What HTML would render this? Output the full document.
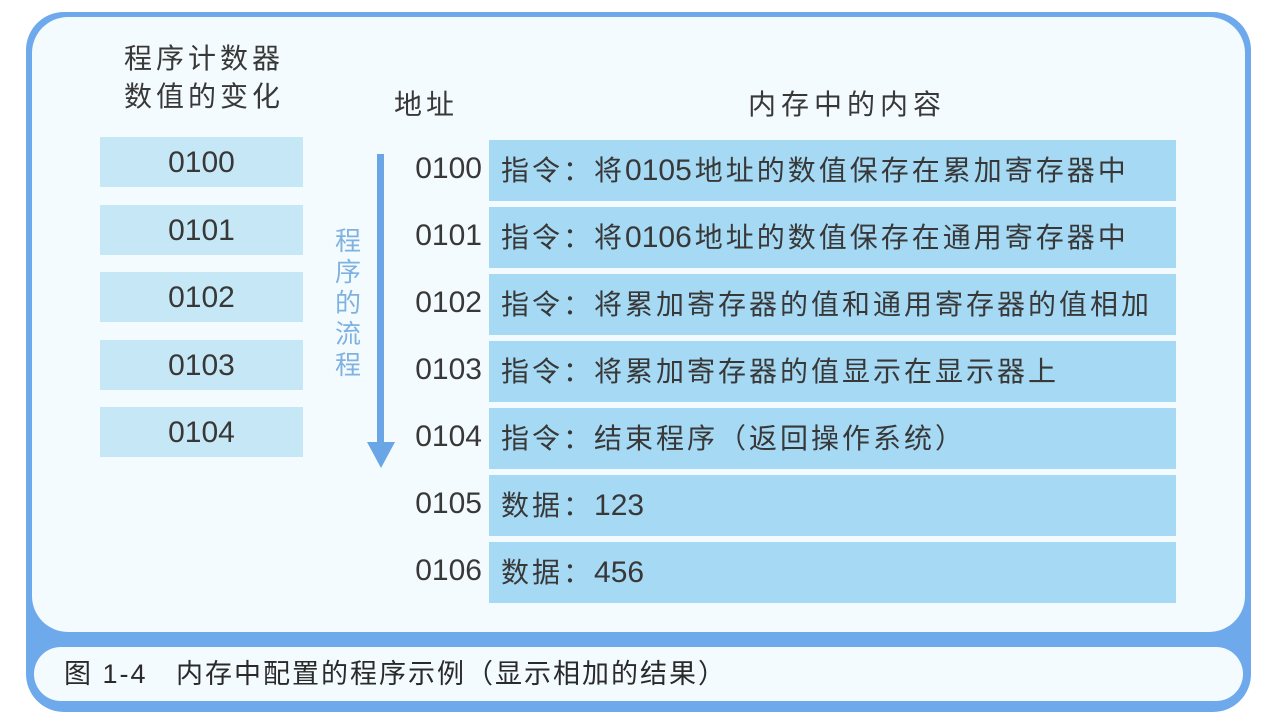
<!DOCTYPE html>
<html><head><meta charset="utf-8"><style>
body{margin:0;width:1280px;height:722px;background:#fff;position:relative;overflow:hidden;font-family:"Liberation Sans","Noto Sans CJK SC",sans-serif;color:#383838}
.a{position:absolute}
.outer{left:26px;top:12px;width:1225px;height:700px;background:#6ea9ec;border-radius:38px}
.panel{left:32px;top:17px;width:1213px;height:615px;background:#f4fbfe;border-radius:36px}
.cap{left:34px;top:647px;width:1209px;height:54px;background:#f4fbfe;border-radius:27px}
.pc{left:100px;width:203px;height:50px;background:#c6e8f6;font-size:30px;text-align:center;line-height:52px}
.mem{left:489px;width:687px;height:61px;background:#a6d9f4;font-size:28px;line-height:61px;padding-left:12px;box-sizing:border-box;letter-spacing:3px;white-space:nowrap}
.mem b{font-weight:normal;letter-spacing:0;font-size:30px;margin-right:3px}
.ad{left:400px;width:82px;font-size:30px;line-height:61px;text-align:right}
.h{font-size:28px;letter-spacing:4px;line-height:38px}
</style></head><body>
<div class="a outer"></div>
<div class="a panel"></div>
<div class="a cap"></div>

<div class="a h" style="left:124px;top:40px">程序计数器<br>数值的变化</div>
<div class="a h" style="left:394px;top:86px">地址</div>
<div class="a h" style="left:748px;top:86px;letter-spacing:5px">内存中的内容</div>

<div class="a pc" style="top:137px">0100</div>
<div class="a pc" style="top:205px">0101</div>
<div class="a pc" style="top:272px">0102</div>
<div class="a pc" style="top:340px">0103</div>
<div class="a pc" style="top:407px">0104</div>

<div class="a" style="left:333px;top:226px;width:30px;font-size:26px;line-height:31px;color:#7fb2e0;text-align:center">程<br>序<br>的<br>流<br>程</div>
<svg class="a" style="left:364px;top:150px" width="34" height="320"><rect x="13" y="4" width="7" height="292" fill="#6aa6e6"/><polygon points="3,292 31,292 17,318" fill="#6aa6e6"/></svg>

<div class="a mem" style="top:140px">指令：将<b>0105</b>地址的数值保存在累加寄存器中</div>
<div class="a mem" style="top:207px">指令：将<b>0106</b>地址的数值保存在通用寄存器中</div>
<div class="a mem" style="top:274px">指令：将累加寄存器的值和通用寄存器的值相加</div>
<div class="a mem" style="top:341px">指令：将累加寄存器的值显示在显示器上</div>
<div class="a mem" style="top:408px">指令：结束程序（返回操作系统）</div>
<div class="a mem" style="top:475px">数据：<b>123</b></div>
<div class="a mem" style="top:542px">数据：<b>456</b></div>

<div class="a ad" style="top:138px">0100</div>
<div class="a ad" style="top:205px">0101</div>
<div class="a ad" style="top:272px">0102</div>
<div class="a ad" style="top:339px">0103</div>
<div class="a ad" style="top:406px">0104</div>
<div class="a ad" style="top:473px">0105</div>
<div class="a ad" style="top:540px">0106</div>

<div class="a" style="left:64px;top:655px;font-size:27px;line-height:38px;color:#2a2a2a;white-space:pre;letter-spacing:2px">图 1-4   内存中配置的程序示例（显示相加的结果）</div>
</body></html>
